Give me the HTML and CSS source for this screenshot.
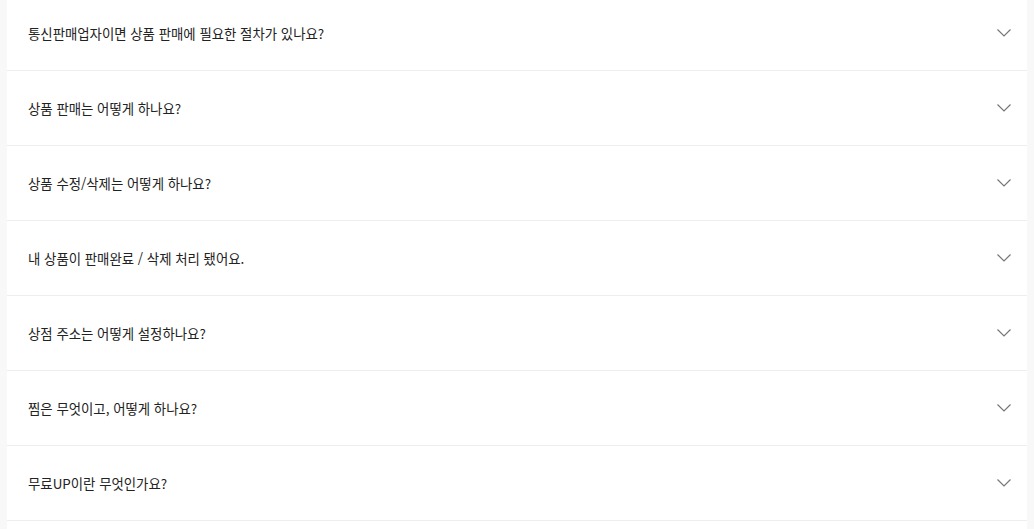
FILE: index.html
```html
<!DOCTYPE html>
<html lang="ko">
<head>
    <meta charset="UTF-8">
    <meta name="viewport" content="width=device-width, initial-scale=1.0">
    <title>자주 묻는 질문</title>
    <link rel="stylesheet" href="styles.css">
</head>
<body>
    <ul class="faq">
        <li class="faq-item"><span>통신판매업자이면 상품 판매에 필요한 절차가 있나요?</span><svg class="arrow" viewBox="0 0 14 8"><path d="M0.5 0.5L7 7L13.5 0.5"/></svg></li>
        <li class="faq-item"><span>상품 판매는 어떻게 하나요?</span><svg class="arrow" viewBox="0 0 14 8"><path d="M0.5 0.5L7 7L13.5 0.5"/></svg></li>
        <li class="faq-item"><span>상품 수정/삭제는 어떻게 하나요?</span><svg class="arrow" viewBox="0 0 14 8"><path d="M0.5 0.5L7 7L13.5 0.5"/></svg></li>
        <li class="faq-item"><span>내 상품이 판매완료 / 삭제 처리 됐어요.</span><svg class="arrow" viewBox="0 0 14 8"><path d="M0.5 0.5L7 7L13.5 0.5"/></svg></li>
        <li class="faq-item"><span>상점 주소는 어떻게 설정하나요?</span><svg class="arrow" viewBox="0 0 14 8"><path d="M0.5 0.5L7 7L13.5 0.5"/></svg></li>
        <li class="faq-item"><span>찜은 무엇이고, 어떻게 하나요?</span><svg class="arrow" viewBox="0 0 14 8"><path d="M0.5 0.5L7 7L13.5 0.5"/></svg></li>
        <li class="faq-item"><span>무료UP이란 무엇인가요?</span><svg class="arrow" viewBox="0 0 14 8"><path d="M0.5 0.5L7 7L13.5 0.5"/></svg></li>
    </ul>
</body>
</html>
```
FILE: styles.css
```css
body {
    margin: 0;
    background: #f8f8f8;
    font-family: "Noto Sans CJK KR", "Noto Sans", sans-serif;
    color: #222;
    overflow: hidden;
}
.faq {
    list-style: none;
    margin: -4px 7px 0;
    padding: 0 0 40px;
    background: #fff;
}
.faq-item {
    display: flex;
    align-items: center;
    justify-content: space-between;
    height: 74px;
    padding: 0 16px 0 21px;
    border-bottom: 1px solid #eee;
    font-size: 13.4px;
    cursor: pointer;
}
.arrow {
    width: 14px;
    height: 8px;
    fill: none;
    stroke: #777;
    stroke-width: 1.2;
}
```
